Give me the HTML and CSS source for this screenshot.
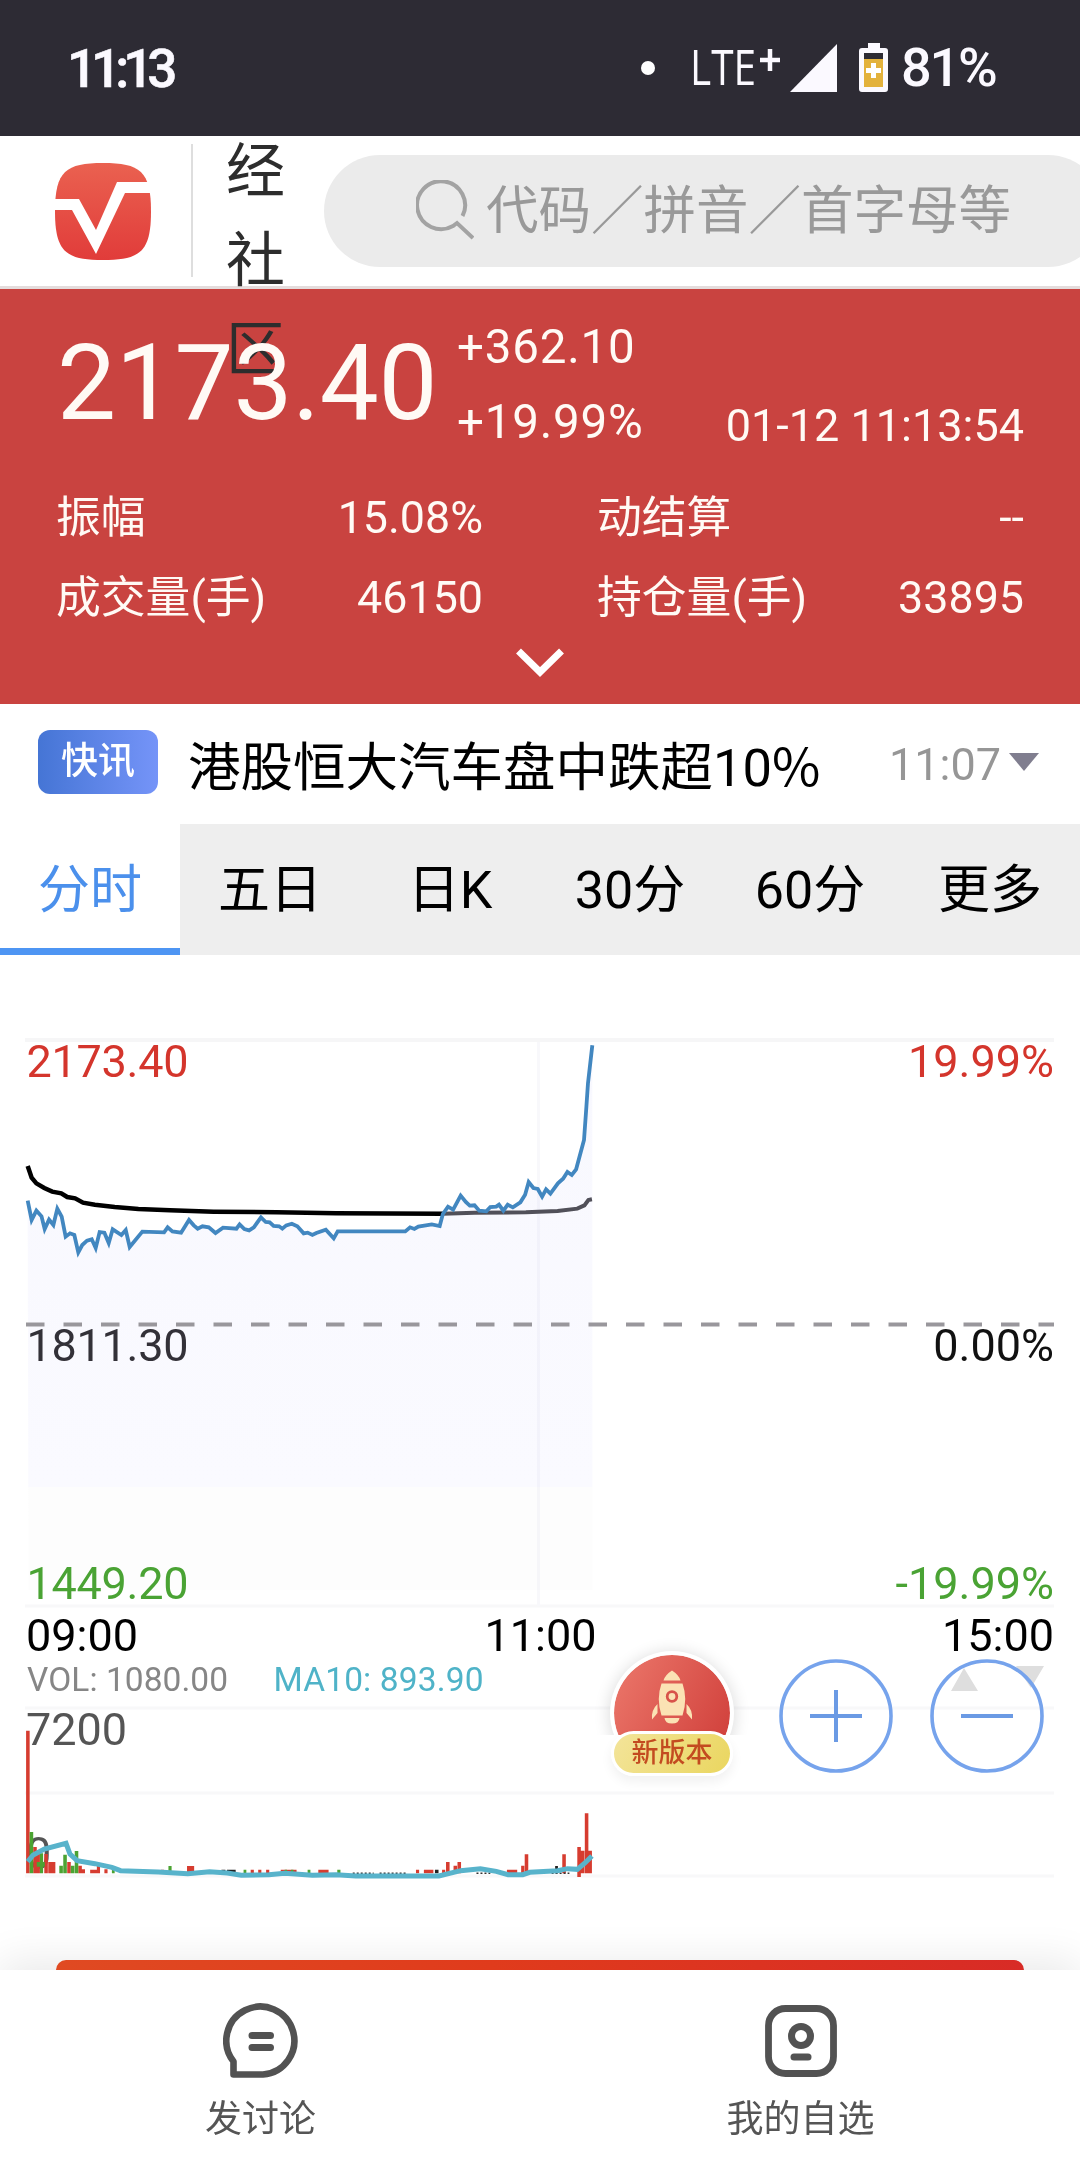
FILE: index.html
```
<!DOCTYPE html>
<html lang="zh-CN">
<head>
<meta charset="utf-8">
<title>行情</title>
<link rel="stylesheet" href="styles.css">
</head>
<body>
<div class="status">
  <span class="clock">11:13</span>
  <div class="status-right">
    <i class="dot"></i>
    <svg class="lte" width="66" height="70" viewBox="0 -10 66 70"><text x="-1" y="42" textLength="66" lengthAdjust="spacingAndGlyphs" fill="#fbf9ff">LTE</text></svg>
    <svg class="lte-plus" width="20" height="22" viewBox="0 0 20 22"><path d="M10 0V22M0 11H20" stroke="#fbf9ff" stroke-width="4.500"/></svg>
    <svg class="signal" width="47" height="48" viewBox="0 0 47 48"><path d="M47 0V48H0Z" fill="#fbf9ff"/></svg>
    <svg class="battery" width="29" height="49" viewBox="0 0 29 49"><path d="M9 0H21V5H26Q29 5 29 8V46Q29 49 26 49H3Q0 49 0 46V8Q0 5 3 5H9Z" fill="#fbf9ff"/><path d="M5 10H24V16H5Z" fill="#2d2b34"/><path d="M5 16H24V44H5Z" fill="#e3b23c"/><path d="M14.500 20V35M7 27.500H22" stroke="#fff" stroke-width="5"/></svg>
    <span class="percent">81%</span>
  </div>
</div>

<header class="header">
  <svg class="logo" width="96" height="97" viewBox="0 0 96 97">
    <defs><linearGradient id="lg" x1="0" y1="0" x2="0" y2="1"><stop offset="0" stop-color="#ea6150"/><stop offset="1" stop-color="#e13c3a"/></linearGradient></defs>
    <path d="M48 0C85 0 96 8 96 48.500S85 97 48 97 0 89 0 48.500 11 0 48 0Z" fill="url(#lg)"/>
    <path d="M0 36H24L41 67 62 19H96V30H70L41 91 17 47H0Z" fill="#fff"/>
  </svg>
  <i class="divider"></i>
  <span class="brand">经社区</span>
  <div class="search">
    <svg width="58" height="62" viewBox="0 0 58 62"><path d="M46.500 36A24 24 0 1 0 37 46L41 43L57 58" fill="none" stroke="#a3a3a3" stroke-width="4"/></svg>
    <span>代码／拼音／首字母等</span>
  </div>
</header>

<section class="quote">
  <div class="quote-top">
    <span class="price">2173.40</span>
    <div class="change"><span>+362.10</span><span>+19.99%</span></div>
    <span class="date">01-12 11:13:54</span>
  </div>
  <div class="stats">
    <div><span>振幅</span><b>15.08%</b></div>
    <div><span>动结算</span><b>--</b></div>
    <div><span>成交量(手)</span><b>46150</b></div>
    <div><span>持仓量(手)</span><b>33895</b></div>
  </div>
  <svg class="chevron" width="50" height="32" viewBox="0 0 50 32"><path d="M3.500 4L25 25 46.500 4" fill="none" stroke="#fff" stroke-width="7"/></svg>
</section>

<section class="news">
  <span class="badge">快讯</span>
  <span class="headline">港股恒大汽车盘中跌超10<span class="pct">%</span></span>
  <span class="news-time">11:07</span>
  <svg width="30" height="18" viewBox="0 0 30 18"><path d="M0 0H30L15 18Z" fill="#807e8f"/></svg>
</section>

<nav class="tabs">
  <span class="tab active">分时</span><span class="tab">五日</span><span class="tab">日K</span><span class="tab">30分</span><span class="tab">60分</span><span class="tab">更多</span>
</nav>

<main class="chart">
  <svg width="1080" height="1005" viewBox="0 955 1080 1005">
    <defs><linearGradient id="fill" x1="0" y1="0" x2="0" y2="1"><stop offset="0" stop-color="#f8f8fe"/><stop offset=".81" stop-color="#fafaff"/><stop offset=".811" stop-color="#fdfdfd"/><stop offset="1" stop-color="#fdfdfd"/></linearGradient></defs>
    <path d="M25 1040H1054" stroke="#f6f6f7" stroke-width="4"/>
    <path d="M25 1606H1054" stroke="#f8f8f9" stroke-width="3"/>
    <path d="M538.500 1042V1606" stroke="#f8f8fb" stroke-width="3"/>
    <path d="M25 1708H1054M25 1793H1054M25 1876H1054" stroke="#f8f8f9" stroke-width="3"/>
    <!-- average price -->
    <g transform="translate(0 1020) scale(.39541 .33333)" fill="none">
      <path class="ns" d="M70 438L80 473 92 490 112 504 132 515 155 520 170 531 190 535 210 548 240 554 290 561 350 567 430 571 540 575 700 577 850 580 1120 581" stroke="#000" stroke-width="4.500"/>
      <path class="ns" d="M1120 581L1200 578 1330 577 1410 573 1460 566 1478 556 1488 540 1497 538" stroke="#535259" stroke-width="4"/>
      <path class="area" d="M70 542L80 600 92 572 105 589 113 627 124 599 135 615 145 566 156 590 166 650 177 640 188 645 198 697 208 675 220 662 232 658 242 684 252 636 264 638 275 669 285 628 307 645 318 630 328 681 360 635 415 637 424 622 436 634 458 638 478 600 490 616 500 626 512 619 528 622 545 639 564 623 598 626 606 613 618 627 630 631 642 622 660 592 672 606 682 607 692 618 706 619 714 626 724 616 738 611 752 619 768 640 778 638 790 645 800 639 824 629 844 655 854 634 1025 634 1037 622 1048 627 1058 620 1092 613 1112 618 1120 582 1133 560 1146 569 1165 527 1178 546 1188 557 1200 556 1212 572 1230 574 1240 561 1255 560 1262 554 1273 572 1284 554 1297 562 1316 547 1328 524 1337 486 1349 504 1360 507 1371 530 1381 508 1392 521 1411 490 1424 476 1435 456 1446 465 1457 448 1477 360 1483 260 1487 190 1498 76V1710H72Z" fill="url(#fill)"/>
      <path class="ns" d="M70 542L80 600 92 572 105 589 113 627 124 599 135 615 145 566 156 590 166 650 177 640 188 645 198 697 208 675 220 662 232 658 242 684 252 636 264 638 275 669 285 628 307 645 318 630 328 681 360 635 415 637 424 622 436 634 458 638 478 600 490 616 500 626 512 619 528 622 545 639 564 623 598 626 606 613 618 627 630 631 642 622 660 592 672 606 682 607 692 618 706 619 714 626 724 616 738 611 752 619 768 640 778 638 790 645 800 639 824 629 844 655 854 634 1025 634 1037 622 1048 627 1058 620 1092 613 1112 618 1120 582 1133 560 1146 569 1165 527 1178 546 1188 557 1200 556 1212 572 1230 574 1240 561 1255 560 1262 554 1273 572 1284 554 1297 562 1316 547 1328 524 1337 486 1349 504 1360 507 1371 530 1381 508 1392 521 1411 490 1424 476 1435 456 1446 465 1457 448 1477 360 1483 260 1487 190 1498 76" stroke="#4287c0" stroke-width="3.800"/>
    </g>
    <path d="M26 1324.500H1054" stroke="#99979c" stroke-width="4" stroke-dasharray="18.500 19"/>
    <g class="axis">
      <text x="26.500" y="1077" textLength="162" fill="#d4352c">2173.40</text>
      <text x="26.500" y="1360.500" textLength="162" fill="#333138">1811.30</text>
      <text x="26.500" y="1599" textLength="162" fill="#4aa334">1449.20</text>
      <text class="end" x="1054" y="1077" fill="#d4352c">19.99%</text>
      <text class="end" x="1054" y="1360.500" fill="#111">0.00%</text>
      <text class="end" x="1054" y="1599" fill="#4aa334">-19.99%</text>
      <text x="26" y="1651">09:00</text>
      <text x="484.500" y="1651">11:00</text>
      <text class="end" x="1054" y="1651">15:00</text>
      <text class="small" x="27" y="1691" textLength="201" fill="#868686">VOL: 1080.00</text>
      <text class="small" x="273.500" y="1691" textLength="210" fill="#4fb3c8">MA10: 893.90</text>
      <text x="26" y="1745" fill="#555">7200</text>
      <text x="26" y="1869" fill="#555">0</text>
    </g>
    <path d="M951 1691L964 1668 978 1691ZM1016 1666H1044L1031 1688Z" fill="#dedede"/>
    <!-- volume bars and moving average -->
    <g transform="translate(0 1600) scale(.39541 .33333)">
      <path fill="#d63c30" d="M66 392h9V820h-9ZM84 741h9V820h-9ZM93 752h8V820h-8ZM112 762h9V820h-9ZM122 786h18V820h-18ZM170 786h9V820h-9ZM198 797h9V820h-9ZM207 808h8V820h-8ZM228 809h20V820h-20ZM245 798h8V820h-8ZM264 808h8V820h-8ZM407 809h8V820h-8ZM473 798h18V820h-18ZM634 809h8V820h-8ZM653 809h8V820h-8ZM673 809h8V820h-8ZM710 809h40V820h-40ZM805 809h26V820h-26ZM1052 809h8V820h-8ZM1072 809h24V820h-24ZM1118 809h8V820h-8ZM1128 786h9V820h-9ZM1147 797h9V820h-9ZM1157 786h9V820h-9ZM1282 809h26V820h-26ZM1318 797h8V820h-8ZM1327 763h9V820h-9ZM1422 763h9V820h-9ZM1460 741h9V831h-9ZM1469 752h9V820h-9ZM1479 640h9V820h-9ZM1488 752h9V820h-9Z"/>
      <path fill="#4ba332" d="M75 696h9V820h-9ZM101 760h8V820h-8ZM93 786h20V800h-20ZM150 797h9V820h-9ZM160 764h9V820h-9ZM179 797h9V820h-9ZM189 753h9V820h-9ZM283 808h7V820h-7ZM426 798h8V820h-8ZM616 809h7V820h-7ZM720 809h6V820h-6ZM736 809h6V820h-6ZM778 809h7V820h-7ZM853 809h8V820h-8Z"/>
      <path fill="#222" d="M560 809h10V820h-10ZM574 809h22V820h-22ZM1100 809h9V820h-9ZM1404 798h7V820h-7Z"/>
      <path class="ns" d="M892 820H945M960 820H1030M1205 820H1240M1395 820H1440" stroke="#333" stroke-width="1.500" stroke-dasharray="2 2"/>
      <path class="ns" d="M70 785L84 765 112 747 167 730 177 762 195 782 240 791 283 802 305 812 400 816 475 821 530 815 575 819 610 826 680 824 720 820 790 826 850 824 900 828 1110 828 1165 812 1215 806 1255 814 1285 824 1322 824 1340 817 1410 812 1435 806 1460 808 1480 788 1497 768" fill="none" stroke="#58b3cb" stroke-width="5"/>
    </g>
  </svg>
  <div class="update">
    <svg width="116" height="116" viewBox="0 0 116 116">
      <defs><linearGradient id="rg" x1="0" y1=".2" x2="1" y2=".7"><stop offset="0" stop-color="#ea7468"/><stop offset="1" stop-color="#d1413c"/></linearGradient></defs>
      <circle cx="58" cy="58" r="58" fill="url(#rg)"/>
      <path d="M49.500 25.500Q51 20 58 15.500Q65 20 66.500 25.500ZM47.500 28.500H68.500Q74 44 68.500 60.500H47.500Q42 44 47.500 28.500ZM50.500 63H65.500Q65 68.500 58 68.500T50.500 63ZM43.500 49V58L38 64.500Q37 55 43.500 49ZM72.500 49V58L78 64.500Q79 55 72.500 49Z" fill="#fbe2b4"/>
      <circle cx="58" cy="41.500" r="4.800" fill="#fbe2b4" stroke="#d8534a" stroke-width="2.800"/>
    </svg>
    <span>新版本</span>
  </div>
  <svg class="round plus" width="116" height="116" viewBox="0 0 116 116"><path d="M58 32V84M32 58H84" stroke="#6b9ae4" stroke-width="4"/><circle cx="58" cy="58" r="55" fill="none" stroke="#76a3ec" stroke-width="3.600"/></svg>
  <svg class="round minus" width="116" height="116" viewBox="0 0 116 116"><path d="M32 58H84" stroke="#6b9ae4" stroke-width="4"/><circle cx="58" cy="58" r="55" fill="none" stroke="#76a3ec" stroke-width="3.600"/></svg>
</main>
<div class="banner"></div>

<footer class="footer">
  <div class="action">
    <svg width="76" height="76" viewBox="0 0 76 76"><path d="M10.500 71.500V58.500A34 34 0 1 1 40 71.500Z" fill="none" stroke="#525252" stroke-width="6.600" stroke-linejoin="round"/><path d="M29 32.500H47.500M29 44.500H47.500" stroke="#525252" stroke-width="7" stroke-linecap="round"/></svg>
    <span>发讨论</span>
  </div>
  <div class="action">
    <svg width="76" height="76" viewBox="0 0 76 76"><rect x="5.500" y="5.500" width="65" height="65" rx="17" fill="none" stroke="#525252" stroke-width="6.800"/><circle cx="38" cy="33" r="9.500" fill="none" stroke="#525252" stroke-width="7"/><path d="M31 54H45" stroke="#525252" stroke-width="7" stroke-linecap="round"/></svg>
    <span>我的自选</span>
  </div>
</footer>
</body>
</html>
```
FILE: styles.css
```
* { box-sizing: border-box; }
body { margin: 0; width: 1080px; height: 2166px; overflow: hidden; background: #fff; font-family: Roboto, "Noto Sans CJK SC", sans-serif; color: #000; }
svg { display: block; flex: none; }
span { white-space: nowrap; }

.status { height: 136px; padding: 0 83px 0 67px; background: #2d2b34; color: #fbf9ff; display: flex; align-items: center; justify-content: space-between; }
.clock { font-size: 53px; font-weight: 500; line-height: 60px; letter-spacing: -6px; -webkit-text-stroke: .6px #fbf9ff; margin-top: 2px; }
.status-right { display: flex; align-items: center; }
.dot { width: 14px; height: 14px; border-radius: 50%; background: #fff; margin-right: 36px; }
.lte { font: 400 49px "Open Sans", sans-serif; }
.lte-plus { margin: -16px 10px 0 3px; }
.signal { margin-right: 22px; }
.battery { margin: -2px 13px 0 0; }
.percent { font-size: 54px; font-weight: 500; line-height: 60px; width: 96px; letter-spacing: -2.200px; }

.header { height: 153px; display: flex; align-items: flex-start; padding-left: 55px; background: #fff; border-bottom: 3px solid #e4dcdc; position: relative; z-index: 1; }
.logo { margin-top: 27px; }
.divider { width: 2px; height: 133px; margin: 8px 0 0 40px; background: #dedede; flex: none; }
.brand { width: 59px; margin: -9px 0 0 33px; font-size: 59px; line-height: 89px; color: #2d2d2d; white-space: normal; word-break: break-all; flex: none; }
.search { flex: none; width: 780px; height: 112px; margin: 19px 0 0 39px; padding-left: 92px; border-radius: 56px; background: #ebebeb; display: flex; align-items: center; gap: 12px; color: #999; font-size: 52.500px; }
.search span { line-height: 80px; margin-top: -1px; }

.quote { height: 415px; background: #c94340; color: #fffaf5; padding: 21px 56px 0; }
.quote-top { position: relative; z-index: 2; height: 162px; display: flex; align-items: flex-start; }
.price { font-size: 105px; line-height: 124px; letter-spacing: -.200px; margin-top: 12px; padding-left: 1px; width: 401px; flex: none; }
.change { display: flex; flex-direction: column; font-size: 47.500px; line-height: 75px; letter-spacing: .800px; }
.date { margin: 78px 0 0 auto; font-size: 45px; line-height: 76px; }
.stats { display: grid; grid-template-columns: 427px 427px; column-gap: 114px; grid-auto-rows: 80px; font-size: 44.800px; margin-top: 6px; }
.stats div { display: flex; justify-content: space-between; align-items: center; line-height: 60px; }
.stats b { font-weight: 400; }
.chevron { margin: 9px auto 0; }

.news { height: 120px; display: flex; align-items: center; padding: 0 41px 4px 38px; }
.badge { width: 120px; height: 64px; border-radius: 12px; background: linear-gradient(90deg, #4575d5, #7594f8); color: #fff; font-size: 37px; font-weight: 500; line-height: 64px; text-align: center; }
.headline { margin: 0 auto 0 30px; font-size: 52.500px; line-height: 70px; padding-top: 12px; }
.pct { font-family: "Noto Sans CJK SC", sans-serif; line-height: 1; }
.news-time { color: #969696; font-size: 45px; margin: 4px 8px 0 0; }

.tabs { height: 131px; display: grid; grid-template-columns: repeat(6, 180px); background: #eee; }
.tab { text-align: center; font-size: 52px; line-height: 133px; height: 131px; }
.active { background: #fff; color: #4b90ec; border-bottom: 7px solid #4e95f3; }

.chart { position: relative; height: 1005px; }
.ns { vector-effect: non-scaling-stroke; }
.area { mix-blend-mode: multiply; }
.axis { font-size: 45px; }
.axis .small { font-size: 33.500px; }
.end { text-anchor: end; }
.update { position: absolute; left: 614px; top: 700px; width: 116px; height: 118px; }
.update > svg { border-radius: 50%; box-shadow: 0 0 0 4px #fff, 0 2px 16px 5px rgba(0,0,0,.14); clip-path: inset(-30px -30px 36px); }
.update span { position: absolute; left: -3px; bottom: -3px; width: 122px; height: 45px; border: 3px solid #fff; border-radius: 23px; background: linear-gradient(120deg, #f3e49a, #ead65f); color: #c34b20; font-size: 27px; font-weight: 500; line-height: 39px; text-align: center; box-shadow: 0 6px 12px rgba(0,0,0,.06); }
.round { position: absolute; top: 703px; }
.plus { left: 778px; }
.minus { left: 928.500px; }
.banner { position: relative; z-index: 2; height: 10px; margin: 0 56px; border-radius: 12px 12px 0 0; background: linear-gradient(90deg, #e04a22, #e03b1c 45%, #d82b26); }

.footer { position: relative; height: 196px; background: #fff; box-shadow: 0 -8px 40px rgba(0,0,0,.09); display: grid; grid-template-columns: 521px 559px; }
.action { display: flex; flex-direction: column; align-items: center; padding-top: 33px; color: #555; font-size: 37px; line-height: 50px; gap: 16px; }
```
